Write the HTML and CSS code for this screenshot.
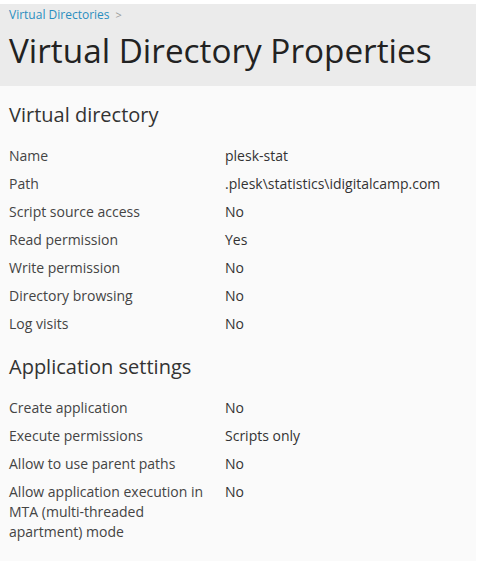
FILE: index.html
```html
<!DOCTYPE html>
<html>
<head>
<meta charset="utf-8">
<link rel="stylesheet" href="styles.css">
</head>
<body>
<div class="page">
  <header class="page-header">
    <div class="breadcrumbs"><a class="crumb" href="#">Virtual Directories</a><span class="sep">&gt;</span></div>
    <h1 class="title">Virtual Directory Properties</h1>
  </header>
  <main class="content">
    <section class="section">
      <h2 class="section-title">Virtual directory</h2>
      <div class="props">
        <div class="row"><div class="label">Name</div><div class="value">plesk-stat</div></div>
        <div class="row"><div class="label">Path</div><div class="value">.plesk\statistics\idigitalcamp.com</div></div>
        <div class="row"><div class="label">Script source access</div><div class="value">No</div></div>
        <div class="row"><div class="label">Read permission</div><div class="value">Yes</div></div>
        <div class="row"><div class="label">Write permission</div><div class="value">No</div></div>
        <div class="row"><div class="label">Directory browsing</div><div class="value">No</div></div>
        <div class="row"><div class="label">Log visits</div><div class="value">No</div></div>
      </div>
    </section>
    <section class="section">
      <h2 class="section-title">Application settings</h2>
      <div class="props">
        <div class="row"><div class="label">Create application</div><div class="value">No</div></div>
        <div class="row"><div class="label">Execute permissions</div><div class="value">Scripts only</div></div>
        <div class="row"><div class="label">Allow to use parent paths</div><div class="value">No</div></div>
        <div class="row"><div class="label">Allow application execution in MTA (multi-threaded apartment) mode</div><div class="value">No</div></div>
      </div>
    </section>
  </main>
</div>
</body>
</html>
```
FILE: styles.css
```css
html, body {
  margin: 0;
  padding: 0;
  background: #ffffff;
}
body {
  font-family: "Open Sans", "Noto Sans", sans-serif;
  color: #333;
}
.page {
  margin: 4px 1px 0 0;
  height: 557px;
  background: #fafafa;
  display: flex;
  flex-direction: column;
}
.page-header {
  background: #ebebeb;
  padding: 3px 9px 0;
  height: 82px;
  box-sizing: border-box;
}
.breadcrumbs {
  font-size: 12px;
  line-height: 16px;
  display: flex;
  align-items: center;
  gap: 6px;
}
.crumb {
  color: #2a8ebf;
  text-decoration: none;
}
.sep {
  color: #999;
  font-size: 11px;
}
.title {
  margin: 5px 0 0;
  font-size: 33.3px;
  font-weight: 400;
  line-height: 44px;
  color: #222;
}
.content {
  padding: 15px 9px 0;
}
.section-title {
  margin: 0 0 13px;
  font-size: 20px;
  font-weight: 400;
  line-height: 28px;
  color: #333;
}
.section + .section {
  margin-top: 15px;
}
.props {
  display: flex;
  flex-direction: column;
}
.row {
  display: grid;
  grid-template-columns: 216px 1fr;
  font-size: 14px;
  line-height: 20px;
  padding: 4px 0;
}
.label {
  color: #444;
  padding-right: 10px;
}
.value {
  color: #333;
}
```
